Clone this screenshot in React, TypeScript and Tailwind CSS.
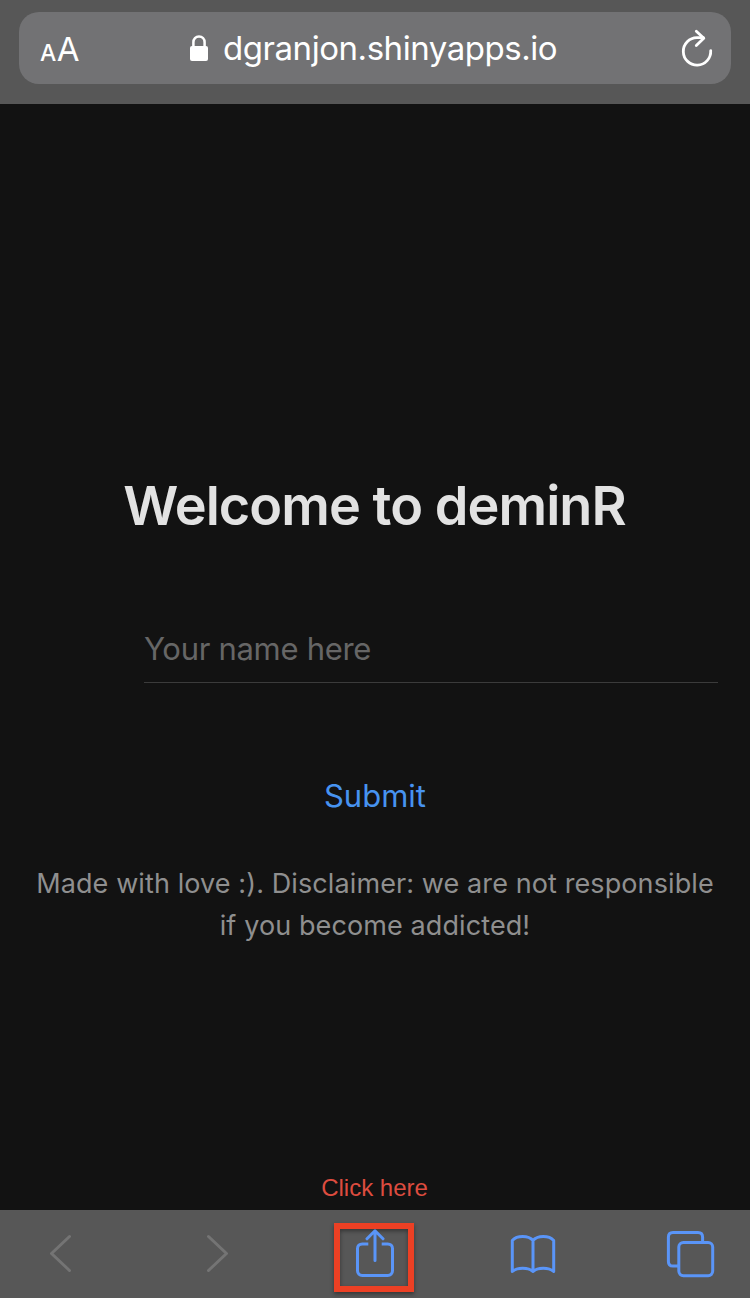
import React from "react";

function AddressBar() {
  return (
    <header className="h-[104px] shrink-0 bg-[#575757] px-[19px] pt-3">
      <div className="flex h-[72px] w-full items-start rounded-[20px] bg-[#727274] text-white">
        <div className="ml-[21px] mt-[17px] flex h-[40px] w-[40px] items-baseline whitespace-nowrap leading-[40px]">
          <span className="text-[23px] font-medium tracking-[0.4px]">A</span>
          <span className="text-[33px]">A</span>
        </div>
        <svg className="ml-[109px] mt-[23px] h-[28px] w-[20px] shrink-0" viewBox="0 0 20 28" fill="none">
          <path d="M4.4 12V7.2C4.4 3.8 6.7 1.4 10 1.4s5.6 2.4 5.6 5.8V12" stroke="currentColor" strokeWidth="2.5" />
          <rect x="1" y="11" width="18" height="15" rx="2" fill="currentColor" />
        </svg>
        <div className="ml-[14px] mt-[16px] w-[456px] shrink-0 whitespace-nowrap text-[33px] leading-[40px] tracking-[-0.45px]">
          <span>dgranjon.shinyapps.io</span>
        </div>
        <svg className="mt-[16px] h-[40px] w-[36px] shrink-0" viewBox="0 0 36 40" fill="none" stroke="currentColor" strokeWidth="2.8" strokeLinecap="round" strokeLinejoin="round">
          <path d="M31.7 22.6A13.7 13.7 0 1 1 18 9.7h6.3" />
          <path d="M17.3 3.2l7.5 7.1-7.5 7.3" />
        </svg>
      </div>
    </header>
  );
}

function Toolbar() {
  return (
    <nav className="flex h-[88px] shrink-0 items-start bg-[#575757]">
      <svg className="ml-[48px] mt-[23px] h-[41px] w-[24px] shrink-0" viewBox="0 0 24 41" fill="none" stroke="#747474" strokeWidth="3" strokeLinecap="round" strokeLinejoin="round">
        <path d="M21.5 3.5L3.5 20.5l18 17" />
      </svg>
      <svg className="ml-[133px] mt-[23px] h-[41px] w-[24px] shrink-0" viewBox="0 0 24 41" fill="none" stroke="#747474" strokeWidth="3" strokeLinecap="round" strokeLinejoin="round">
        <path d="M3.5 3.5l18 17-18 17" />
      </svg>
      <div className="ml-[105px] mt-[13px] h-[69px] w-[80px] shrink-0 border-[6px] border-[#ec4024] shadow-[0_2px_4px_rgba(0,0,0,0.4),inset_0_2px_4px_rgba(0,0,0,0.4)]">
        <svg className="h-[57px] w-[68px]" viewBox="0 0 68 57" fill="none" stroke="#5a95f8" strokeWidth="3" strokeLinecap="round" strokeLinejoin="round">
          <path d="M35 31.5V2.3M27 9.8l8-8 8 8" />
          <path d="M28.3 14.9h-6c-2.8 0-4.8 1.8-4.8 4.6v22.3c0 2.8 2 4.6 4.8 4.6h25.4c2.8 0 4.8-1.8 4.8-4.6V19.5c0-2.8-2-4.6-4.8-4.6h-6" strokeLinecap="butt" />
        </svg>
      </div>
      <svg className="ml-[96px] mt-[24px] h-[40px] w-[46px] shrink-0" viewBox="0 0 46 40" fill="none" stroke="#5a95f8" strokeWidth="3" strokeLinecap="round" strokeLinejoin="round">
        <path d="M23 6.5C18.5 1.2 7 1.2 2.3 6.5V37.5C7 33 18.5 33 23 37.5C27.5 33 39 33 43.7 37.5V6.5C39 1.2 27.5 1.2 23 6.5V37.5" />
      </svg>
      <svg className="ml-[110px] mt-[20px] h-[48px] w-[49px] shrink-0" viewBox="0 0 49 48" fill="none" stroke="#5a95f8" strokeWidth="3">
        <path d="M12.5 36.1H7c-2.8 0-4.6-1.8-4.6-4.6V7c0-2.8 1.8-4.6 4.6-4.6h25c2.8 0 4.6 1.8 4.6 4.6v5.5" />
        <rect x="12.8" y="12.4" width="33.9" height="33.3" rx="4.6" />
      </svg>
    </nav>
  );
}

export default function App() {
  return (
    <div className="flex h-[1298px] w-[750px] flex-col overflow-hidden bg-[#121212] font-['Inter',sans-serif]">
      <AddressBar />
      <main className="flex h-[1106px] shrink-0 flex-col items-center">
        <h1 className="mt-[370px] whitespace-nowrap pr-px text-[54px] font-semibold leading-[64px] tracking-[-0.95px] text-[#e2e2e2]">
          <span>Welcome to deminR</span>
        </h1>
        <div className="ml-[144px] mt-[78px] h-[67px] w-[574px] self-start border-b border-[#3b3b3b]">
          <input
            className="block h-[64px] w-full bg-transparent text-[31px] tracking-[-0.3px] text-white outline-none placeholder:text-[#666666] placeholder:opacity-100"
            placeholder="Your name here"
          />
        </div>
        <button className="mt-[93px] h-[40px] whitespace-nowrap text-[31px] leading-[40px] text-[#4793f0]">
          <span>Submit</span>
        </button>
        <p className="mt-[47px] whitespace-nowrap text-center text-[27px] leading-[42px] tracking-[0.1px] text-[#8f8f8f]">
          <span>Made with love :). Disclaimer: we are not responsible</span>
          <br />
          <span>if you become addicted!</span>
        </p>
        <p className="mt-[226px] whitespace-nowrap pr-px font-['Liberation_Sans',sans-serif] text-[24px] leading-[30px] text-[#dd4c3f]">Click here</p>
      </main>
      <Toolbar />
    </div>
  );
}
